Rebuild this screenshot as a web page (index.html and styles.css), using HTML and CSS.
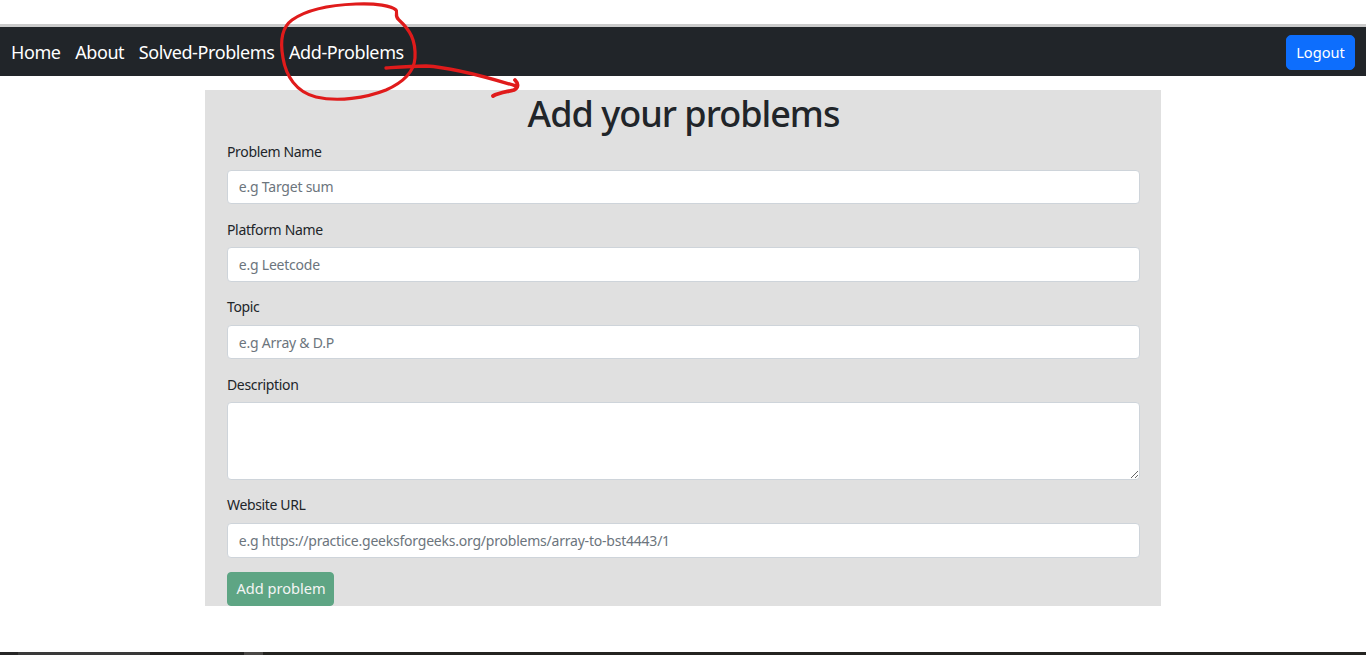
FILE: index.html
```html
<!DOCTYPE html>
<html lang="en">
<head>
<meta charset="utf-8">
<title>Add Problems</title>
<link rel="stylesheet" href="styles.css">
</head>
<body>
<div class="page">
  <div class="top-gap"></div>
  <nav class="navbar">
    <ul class="nav-links">
      <li><a href="#">Home</a></li>
      <li><a href="#">About</a></li>
      <li><a href="#">Solved-Problems</a></li>
      <li><a href="#">Add-Problems</a></li>
    </ul>
    <button class="btn-logout" type="button">Logout</button>
  </nav>
  <main class="form-card">
    <h1 class="title">Add your problems</h1>
    <form class="problem-form">
      <div class="field">
        <label for="pname">Problem Name</label>
        <input id="pname" class="control" type="text" placeholder="e.g Target sum">
      </div>
      <div class="field">
        <label for="platform">Platform Name</label>
        <input id="platform" class="control" type="text" placeholder="e.g Leetcode">
      </div>
      <div class="field">
        <label for="topic">Topic</label>
        <input id="topic" class="control" type="text" placeholder="e.g Array &amp; D.P">
      </div>
      <div class="field">
        <label for="desc">Description</label>
        <textarea id="desc" class="control textarea" rows="3"></textarea>
      </div>
      <div class="field">
        <label for="url">Website URL</label>
        <input id="url" class="control" type="text" placeholder="e.g https://practice.geeksforgeeks.org/problems/array-to-bst4443/1">
      </div>
      <button class="btn-add" type="button" disabled>Add problem</button>
    </form>
  </main>
  <div class="taskbar">
    <span class="tb-a"></span><span class="tb-b"></span><span class="tb-c"></span><span class="tb-d"></span><span class="tb-e"></span>
  </div>
  <svg class="annotation" width="540" height="110" viewBox="0 0 540 110" aria-hidden="true">
    <path d="M396 10 C 398 12, 394 16, 399 20 C 410 30, 416 40, 415 58 C 414 72, 404 82, 386 90 C 366 98, 338 102, 316 97 C 296 92, 286 76, 283 58 C 280 42, 281 28, 292 20 C 306 10, 330 5, 356 4 C 376 3, 392 6, 396 10"
      fill="none" stroke="#e01b1b" stroke-width="3.2" stroke-linecap="round" stroke-linejoin="round"/>
    <path d="M386 68 C 400 67, 412 66, 426 66 C 446 67, 470 72, 516 86"
      fill="none" stroke="#e01b1b" stroke-width="3.4" stroke-linecap="round"/>
    <path d="M515 80 C 519 84, 518 88, 514 90 C 506 92, 498 93, 493 96"
      fill="none" stroke="#e01b1b" stroke-width="3.8" stroke-linecap="round" stroke-linejoin="round"/>
  </svg>
</div>
</body>
</html>
```

FILE: styles.css
```css
* {
  box-sizing: border-box;
}

html, body {
  margin: 0;
  padding: 0;
  background: #ffffff;
}

body {
  font-family: "Noto Sans", "Open Sans", "Liberation Sans", sans-serif;
  color: #212529;
}

.page {
  position: relative;
  min-height: 655px;
  height: 655px;
  display: flex;
  flex-direction: column;
  overflow: hidden;
}

.top-gap {
  height: 24px;
  flex: none;
}

.navbar {
  flex: none;
  height: 52px;
  border-top: 3px solid #cbcbcb;
  background: #212529;
  display: flex;
  align-items: center;
  justify-content: space-between;
  padding: 0 11px;
}

.nav-links {
  list-style: none;
  margin: 0;
  padding: 0;
  display: flex;
  gap: 14.5px;
}

.nav-links a {
  color: #ffffff;
  text-decoration: none;
  font-size: 18px;
  line-height: 26px;
  letter-spacing: -0.4px;
}

.btn-logout {
  font-family: inherit;
  font-size: 14.6px;
  color: #ffffff;
  background: #0d6efd;
  border: 1px solid #0d6efd;
  border-radius: 5px;
  height: 35px;
  width: 69px;
  padding: 0;
  margin-top: 1px;
}

.form-card {
  flex: none;
  width: 956px;
  margin: 14px auto 0;
  background: #e0e0e0;
  padding: 0 21px 0 22px;
}

.title {
  margin: 2px 0 6px;
  text-align: center;
  font-size: 36px;
  font-weight: 500;
  line-height: 43px;
  letter-spacing: -1px;
  color: #212529;
}

.problem-form {
  margin: 0;
}

.field {
  display: flex;
  flex-direction: column;
  margin-bottom: 14.4px;
}

.field label {
  font-size: 14px;
  line-height: 21.6px;
  margin-bottom: 7.2px;
  letter-spacing: -0.35px;
  color: #212529;
}

.control {
  font-family: inherit;
  font-size: 14px;
  line-height: 21.6px;
  padding: 5.4px 10.8px;
  height: 34.4px;
  border: 1px solid #ced4da;
  border-radius: 4px;
  background: #ffffff;
  color: #212529;
  width: 100%;
  letter-spacing: -0.22px;
}

.control::placeholder {
  color: #6c757d;
  opacity: 1;
}

.textarea {
  height: 77.6px;
  resize: vertical;
  display: block;
}

.btn-add {
  display: block;
  font-family: inherit;
  font-size: 14.6px;
  line-height: 21.6px;
  height: 34.4px;
  width: 107px;
  padding: 0 0 0 1px;
  color: #ffffff;
  background: #198754;
  border: 1px solid #198754;
  border-radius: 4px;
  opacity: 0.65;
}

.taskbar {
  margin-top: auto;
  height: 3px;
  flex: none;
  display: flex;
  background: #232220;
}

.tb-a { width: 18px; background: #262626; }
.tb-b { width: 132px; background: #3a3a3a; }
.tb-c { width: 94px; background: #232220; }
.tb-d { width: 19px; background: #4a4846; }
.tb-e { flex: 1; background: #242320; }

.annotation {
  position: absolute;
  left: 0;
  top: 0;
  pointer-events: none;
}
```
